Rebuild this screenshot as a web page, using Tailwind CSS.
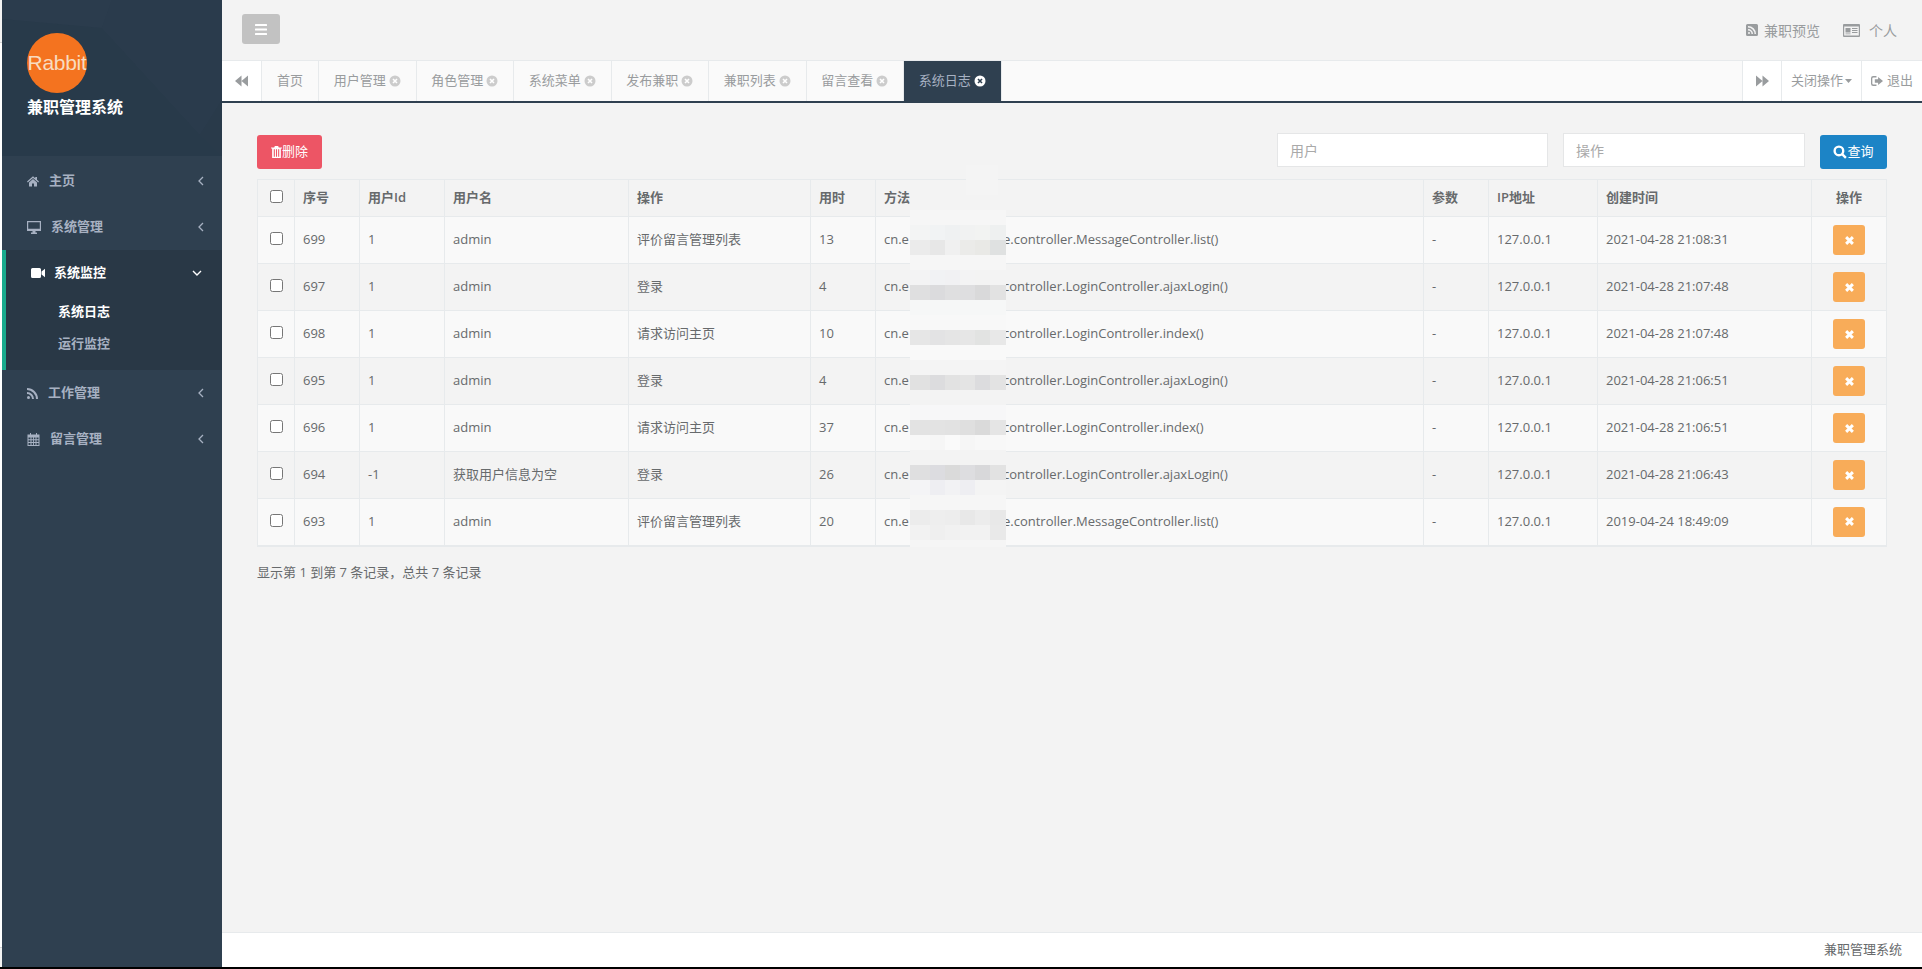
<!DOCTYPE html>
<html lang="zh-CN">
<head>
  <meta charset="UTF-8">
  <title>兼职管理系统</title>
  <script src="https://cdn.jsdelivr.net/npm/@tailwindcss/browser@4"></script>
</head>
<body class="bg-black text-[13px] text-[#676a6c] font-['Open_Sans','Noto_Sans_CJK_SC',sans-serif]">
<div class="flex h-[967px] w-full overflow-hidden bg-[#f3f3f3]">
  <div class="flex w-[2px] shrink-0 flex-col bg-white">
    <div class="h-[43px] border-b border-[#d5d5d5] bg-[#f3f3f3]"></div>
    <div class="flex-1"></div>
    <div class="h-[20px] border-t border-[#d5d5d5] bg-[#f3f3f3]"></div>
  </div>

  <!-- sidebar -->
  <aside class="flex w-[220px] shrink-0 flex-col bg-[#2f4050] font-semibold text-[#a7b1c2]">
    <div class="relative h-[156px] shrink-0 overflow-hidden bg-[#2b3c4d]">
      <svg class="absolute inset-0" width="220" height="156" viewBox="0 0 220 156">
        <polygon points="0,19 100,28 198,135 220,156 0,156" fill="#283a4a"/>
        <polygon points="110,0 220,0 220,100 198,135 100,28" fill="#2a3b4c"/>
        <polygon points="198,135 220,100 220,156" fill="#293a4a"/>
      </svg>
      <div class="relative pl-[25px] pt-[33px]">
        <div class="flex h-[60px] w-[60px] items-center justify-center overflow-hidden rounded-full bg-[#f4731f] font-['Liberation_Sans'] text-[21px] font-normal tracking-[-0.3px] text-[#f8dcc0]">Rabbit</div>
        <div class="mt-[3px] text-[16px] leading-[22px] font-bold text-white">兼职管理系统</div>
      </div>
    </div>
    <nav class="pt-[2px]">
      <a class="flex h-[46px] items-center pl-[25px] pr-[18px]">
        <svg class="mr-[10px] h-[12px] w-[12px]" viewBox="0 0 24 24" fill="currentColor"><path d="M12 2.500 0 13l1.600 1.900L12 6l10.400 8.900L24 13l-4-3.500V4h-3.500v2.500zM4 15v8h6v-6h4v6h6v-8l-8-7z"/></svg>
        <span class="flex-1">主页</span>
        <svg class="h-[10px] w-[6px]" viewBox="0 0 6 10" fill="none" stroke="currentColor" stroke-width="1.300"><path d="M5 1 1 5l4 4"/></svg>
      </a>
      <a class="flex h-[46px] items-center pl-[25px] pr-[18px]">
        <svg class="mr-[10px] h-[13px] w-[14px]" viewBox="0 0 14 13" fill="currentColor"><path fill-rule="evenodd" d="M0 0h14v10H8.500v1.500H10V13H4v-1.500h1.500V10H0zM1.200 1.200v6.600h11.600V1.200z"/></svg>
        <span class="flex-1">系统管理</span>
        <svg class="h-[10px] w-[6px]" viewBox="0 0 6 10" fill="none" stroke="currentColor" stroke-width="1.300"><path d="M5 1 1 5l4 4"/></svg>
      </a>
      <div class="h-[120px] border-l-4 border-[#19aa8d] bg-[#293846]">
        <a class="flex h-[46px] items-center pl-[25px] pr-[20px] text-white">
          <svg class="mr-[9px] h-[10px] w-[14px]" viewBox="0 0 14 10" fill="currentColor"><path d="M1.500 0h7A1.500 1.500 0 0 1 10 1.500v7A1.500 1.500 0 0 1 8.500 10h-7A1.500 1.500 0 0 1 0 8.500v-7A1.500 1.500 0 0 1 1.500 0zM10.500 3.500 14 .8v8.400l-3.500-2.700z"/></svg>
          <span class="flex-1">系统监控</span>
          <svg class="h-[6px] w-[10px]" viewBox="0 0 10 6" fill="none" stroke="currentColor" stroke-width="1.400"><path d="m1 1 4 4 4-4"/></svg>
        </a>
        <div class="flex h-[32px] items-center pl-[52px] pb-[1px] pt-[1px] text-white">系统日志</div>
        <div class="flex h-[32px] items-center pl-[52px]">运行监控</div>
      </div>
      <a class="flex h-[46px] items-center pl-[25px] pr-[18px]">
        <svg class="mr-[10px] h-[11px] w-[11px]" viewBox="0 0 11 11" fill="currentColor"><circle cx="1.500" cy="9.500" r="1.500"/><path d="M0 4v2a5 5 0 0 1 5 5h2a7 7 0 0 0-7-7zM0 0v2a9 9 0 0 1 9 9h2A11 11 0 0 0 0 0z"/></svg>
        <span class="flex-1">工作管理</span>
        <svg class="h-[10px] w-[6px]" viewBox="0 0 6 10" fill="none" stroke="currentColor" stroke-width="1.300"><path d="M5 1 1 5l4 4"/></svg>
      </a>
      <a class="flex h-[46px] items-center pl-[25px] pr-[18px]">
        <svg class="mr-[10px] h-[13px] w-[13px]" viewBox="0 0 12 13" fill="currentColor"><path fill-rule="evenodd" d="M2.500 0h1v1.500h5V0h1v1.500H12V13H0V1.500h2.500zM1 4.500v1.800h2V4.500zm3 0v1.800h1.600V4.500zm2.500 0v1.800H8V4.500zm2.500 0v1.800h2V4.500zM1 7.200V9h2V7.200zm3 0V9h1.600V7.200zm2.500 0V9H8V7.200zm2.500 0V9h2V7.200zM1 9.900V12h2V9.900zm3 0V12h1.600V9.900zm2.500 0V12H8V9.900zm2.500 0V12h2V9.900z"/></svg>
        <span class="flex-1">留言管理</span>
        <svg class="h-[10px] w-[6px]" viewBox="0 0 6 10" fill="none" stroke="currentColor" stroke-width="1.300"><path d="M5 1 1 5l4 4"/></svg>
      </a>
    </nav>
    <div class="flex-1"></div>
  </aside>

  <!-- main -->
  <main class="flex min-w-0 flex-1 flex-col">
    <header class="flex h-[60px] shrink-0 items-center justify-between pl-[20px] pr-[25px] text-[#999c9e]">
      <button class="mb-[2px] flex h-[30px] w-[38px] items-center justify-center rounded-[3px] bg-[#c2c2c2]">
        <svg class="h-[11px] w-[12px]" viewBox="0 0 12 11" fill="white"><rect width="12" height="2" rx=".5"/><rect y="4.500" width="12" height="2" rx=".5"/><rect y="9" width="12" height="2" rx=".5"/></svg>
      </button>
      <div class="flex items-center">
        <svg class="mr-[6px] h-[12px] w-[12px]" viewBox="0 0 12 12" fill="currentColor"><path fill-rule="evenodd" d="M1.500 0h9A1.500 1.500 0 0 1 12 1.500v9a1.500 1.500 0 0 1-1.500 1.500h-9A1.500 1.500 0 0 1 0 10.500v-9A1.500 1.500 0 0 1 1.500 0zM2 2v1.500A6.500 6.500 0 0 1 8.500 10H10a8 8 0 0 0-8-8zm0 3v1.500A3.500 3.500 0 0 1 5.500 10H7a5 5 0 0 0-5-5zm1 3a1 1 0 1 0 0 2 1 1 0 0 0 0-2z"/></svg>
        <span class="text-[14px]">兼职预览</span>
        <svg class="ml-[23px] mr-[9px] h-[13px] w-[17px]" viewBox="0 0 17 13" fill="currentColor"><path fill-rule="evenodd" d="M1 0h15a1 1 0 0 1 1 1v11a1 1 0 0 1-1 1H1a1 1 0 0 1-1-1V1a1 1 0 0 1 1-1zm.2 2.500v9h14.600v-9zM2.500 4h5v4.500h-5zm6.500 0h5.500v1H9zm0 2h5.500v1H9zm0 2h5.500v1H9zM2.500 9.500h5v.8h-5z"/></svg>
        <span class="text-[14px]">个人</span>
      </div>
    </header>

    <div class="flex h-[43px] shrink-0 border-t border-b-2 border-t-[#e7eaec] border-b-[#2f4050] bg-[#fafafa] text-[#999c9e]">
      <div class="flex w-[40px] items-center justify-center border-r border-[#e7eaec] bg-white">
        <svg class="h-[12px] w-[13px]" viewBox="0 0 12 10" fill="currentColor"><path d="M6 0v10L0 5zM12 0v10L6 5z"/></svg>
      </div>
      <div class="flex w-[57px] items-center justify-center border-r border-[#e7eaec]">首页</div>
      <div id="tabs" class="flex"></div>
      <div class="flex-1"></div>
      <div class="flex w-[40px] items-center justify-center border-x border-[#e7eaec] bg-white">
        <svg class="h-[12px] w-[13px]" viewBox="0 0 12 10" fill="currentColor"><path d="M0 0v10l6-5zM6 0v10l6-5z"/></svg>
      </div>
      <div class="flex w-[80px] items-center justify-center border-r border-[#e7eaec] bg-white">关闭操作
        <svg class="ml-[2px] h-[4px] w-[7px]" viewBox="0 0 7 4" fill="currentColor"><path d="M0 0h7L3.500 4z"/></svg>
      </div>
      <div class="flex w-[60px] items-center justify-center bg-white">
        <svg class="mr-[4px] h-[12px] w-[12px]" viewBox="0 0 11 11" fill="currentColor"><path fill-rule="evenodd" d="M2 1h3v1.200H2.200a1 1 0 0 0-1 1v4.600a1 1 0 0 0 1 1H5V10H2a2 2 0 0 1-2-2V3a2 2 0 0 1 2-2zM6.500 1.800 11 5.500 6.500 9.200V7H3.500V4h3z"/></svg>退出
      </div>
    </div>

    <section class="min-h-0 flex-1 pl-[35px] pr-[35px] pt-[30px]">
      <div class="flex h-[46px] items-start justify-between">
        <button class="mt-[2px] flex h-[34px] w-[65px] items-center justify-center rounded-[3px] bg-[#ed5565] text-white">
          <svg class="h-[12px] w-[11px]" viewBox="0 0 10 11" fill="currentColor"><path fill-rule="evenodd" d="M3.500 0h3l.6 1.300H10v1H9V11H1V2.300H0v-1h2.900zM2.500 3v6.800h1V3zm2 0v6.800h1V3zm2 0v6.800h1V3z"/></svg>删除
        </button>
        <div class="flex items-start">
          <input placeholder="用户" class="h-[34px] w-[271px] border border-[#e5e6e7] bg-white px-[12px] text-[14px] placeholder:text-[#a9a9a9]">
          <input placeholder="操作" class="ml-[15px] h-[34px] w-[242px] border border-[#e5e6e7] bg-white px-[12px] text-[14px] placeholder:text-[#a9a9a9]">
          <button class="ml-[15px] mt-[2px] flex h-[34px] w-[67px] items-center justify-center rounded-[3px] bg-[#1c84c6] text-white">
            <svg class="h-[14px] w-[14px]" viewBox="0 0 13 13" fill="none" stroke="currentColor" stroke-width="2.200"><circle cx="5.500" cy="5.500" r="4"/><path d="m8.500 8.500 3.500 3.500"/></svg>查询
          </button>
        </div>
      </div>

      <div class="relative">
        <table class="w-[1629px] table-fixed border-collapse border-b-2 border-[#e7eaec]">
          <colgroup>
            <col class="w-[37px]"><col class="w-[65px]"><col class="w-[85px]"><col class="w-[184px]"><col class="w-[182px]"><col class="w-[65px]"><col class="w-[548px]"><col class="w-[65px]"><col class="w-[109px]"><col class="w-[214px]"><col class="w-[75px]">
          </colgroup>
          <thead>
            <tr class="h-[37px] font-semibold">
              <th class="border border-[#e7eaec] text-center font-semibold"><input type="checkbox" class="relative top-[-2px] align-middle"></th>
              <th class="border border-[#e7eaec] px-[8px] text-left font-semibold">序号</th>
              <th class="border border-[#e7eaec] px-[8px] text-left font-semibold">用户Id</th>
              <th class="border border-[#e7eaec] px-[8px] text-left font-semibold">用户名</th>
              <th class="border border-[#e7eaec] px-[8px] text-left font-semibold">操作</th>
              <th class="border border-[#e7eaec] px-[8px] text-left font-semibold">用时</th>
              <th class="border border-[#e7eaec] px-[8px] text-left font-semibold">方法</th>
              <th class="border border-[#e7eaec] px-[8px] text-left font-semibold">参数</th>
              <th class="border border-[#e7eaec] px-[8px] text-left font-semibold">IP地址</th>
              <th class="border border-[#e7eaec] px-[8px] text-left font-semibold">创建时间</th>
              <th class="border border-[#e7eaec] text-center font-semibold">操作</th>
            </tr>
          </thead>
          <tbody id="rows"></tbody>
        </table>
        <svg id="mosaic" class="absolute left-[653px] top-[-14px]" width="96" height="382" viewBox="0 0 96 382"></svg>
      </div>

      <div class="mt-[16px] leading-[18px]">显示第 1 到第 7 条记录，总共 7 条记录</div>
    </section>

    <footer class="flex h-[35px] shrink-0 items-center justify-end border-t border-[#e7eaec] bg-white pr-[20px]">兼职管理系统</footer>
  </main>
</div>

<script>
  const tabs = ["用户管理", "角色管理", "系统菜单", "发布兼职", "兼职列表", "留言查看", "系统日志"];
  document.getElementById("tabs").innerHTML = tabs.map((t, i) => {
    const active = i === tabs.length - 1;
    return `<div class="flex w-[97.500px] items-center justify-center gap-[3px] border-r border-[#e7eaec] ${active ? "bg-[#2f4050] text-[#a7b1c2]" : ""}">${t}
      <svg class="h-[12px] w-[12px] ${active ? "text-white" : "text-[#cccccc]"}" viewBox="0 0 12 12"><circle cx="6" cy="6" r="5.500" fill="currentColor"/><path d="m4 4 4 4M8 4 4 8" stroke="${active ? "#2f4050" : "white"}" stroke-width="1.600"/></svg>
    </div>`;
  }).join("");

  const data = [
    ["699", "1", "admin", "评价留言管理列表", "13", "e.controller.MessageController.list()", "2021-04-28 21:08:31"],
    ["697", "1", "admin", "登录", "4", "controller.LoginController.ajaxLogin()", "2021-04-28 21:07:48"],
    ["698", "1", "admin", "请求访问主页", "10", "controller.LoginController.index()", "2021-04-28 21:07:48"],
    ["695", "1", "admin", "登录", "4", "controller.LoginController.ajaxLogin()", "2021-04-28 21:06:51"],
    ["696", "1", "admin", "请求访问主页", "37", "controller.LoginController.index()", "2021-04-28 21:06:51"],
    ["694", "-1", "获取用户信息为空", "登录", "26", "controller.LoginController.ajaxLogin()", "2021-04-28 21:06:43"],
    ["693", "1", "admin", "评价留言管理列表", "20", "e.controller.MessageController.list()", "2019-04-24 18:49:09"],
  ];
  const td = "border border-[#e7eaec] px-[8px]";
  document.getElementById("rows").innerHTML = data.map((r, i) => `
    <tr class="h-[47px] ${i % 2 === 0 ? "bg-[#f9f9f9]" : "bg-[#f3f3f3]"}">
      <td class="border border-[#e7eaec] text-center"><input type="checkbox" class="relative top-[-2px] align-middle"></td>
      <td class="${td}">${r[0]}</td>
      <td class="${td}">${r[1]}</td>
      <td class="${td}">${r[2]}</td>
      <td class="${td}">${r[3]}</td>
      <td class="${td}">${r[4]}</td>
      <td class="${td}"><span class="inline-block w-[119px]">cn.e</span>${r[5]}</td>
      <td class="${td}">-</td>
      <td class="${td}">127.0.0.1</td>
      <td class="${td}">${r[6]}</td>
      <td class="border border-[#e7eaec] text-center">
        <button class="inline-flex h-[30px] w-[32px] items-center justify-center rounded-[3px] bg-[#f8ac59] align-middle">
          <svg class="h-[9px] w-[9px]" viewBox="0 0 8 8" stroke="white" stroke-width="2.600"><path d="m1 1 6 6M7 1 1 7"/></svg>
        </button>
      </td>
    </tr>`).join("");

  // the blurred-out package name: bands of 15px, six cells across
  const xs = [0, 20, 35, 50, 65, 80, 96];
  const bands = [
    [["#f3f3f3"], 30, 15],
    [["#f6f6f6"], 45, 15],
    [["#f3f4f4", "#f1f3f4", "#eff1f2", "#f1f2f2", "#f2f3f2", "#eef0f0"], 60],
    [["#ebebeb", "#e7e7e7", "#f0f0f0", "#ebebe9", "#e9e9e6", "#dfe1e1"], 75],
    [["#f6f6f6"], 90],
    [["#f3f3f4", "#f1f2f4", "#f1f1f3", "#f3f3f4", "#f3f3f3", "#f3f3f3"], 105],
    [["#dfdfe0", "#dbdbdd", "#dfdfe0", "#dedee0", "#d9d9da", "#e2e2e2"], 120],
    [["#f6f7f7"], 135],
    [["#f8f8f8"], 150],
    [["#e6e6e6", "#e3e3e4", "#e5e5e5", "#e6e6e6", "#e2e3e2", "#e8e8e8"], 165],
    [["#f9f9f9"], 180],
    [["#f4f4f4"], 195],
    [["#e1e1e1", "#dcdcde", "#e2e2e2", "#e4e4e4", "#dcdcde", "#e3e3e3"], 210],
    [["#f3f3f3"], 225],
    [["#f7f7f8"], 240],
    [["#e3e3e3", "#e3e3e3", "#e2e2e2", "#dfdfdf", "#dadada", "#e5e5e5"], 255],
    [["#f8f8f8", "#f6f6f6", "#fafafa", "#f6f6f6", "#f8f8f8", "#f8f8f8"], 270],
    [["#f3f3f3"], 285],
    [["#dfdfe0", "#dcdce0", "#dadada", "#dddde0", "#d8d8da", "#e2e2e2"], 300],
    [["#f4f4f6", "#eeeef2", "#f2f2f4", "#eeeef2", "#f4f4f4", "#f4f4f4"], 315],
    [["#f6f6f6"], 330],
    [["#ececec", "#eeeeee", "#ededed", "#e8e8e8", "#ececec", "#e8e8e8"], 345],
    [["#f2f2f2", "#efefef", "#f1f1f1", "#f2f2f2", "#f2f2f2", "#e9e9e9"], 360],
    [["#f5f5f5"], 375, 7],
  ];
  document.getElementById("mosaic").innerHTML = bands.map(([colors, y, h = 15]) =>
    colors.length === 1
      ? `<rect x="0" y="${y}" width="96" height="${h}" fill="${colors[0]}"/>`
      : colors.map((c, i) => `<rect x="${xs[i]}" y="${y}" width="${xs[i + 1] - xs[i]}" height="${h}" fill="${c}"/>`).join("")
  ).join("") + `<rect x="56" y="0" width="32" height="30" fill="#f4f4f4"/>`;
</script>
</body>
</html>
